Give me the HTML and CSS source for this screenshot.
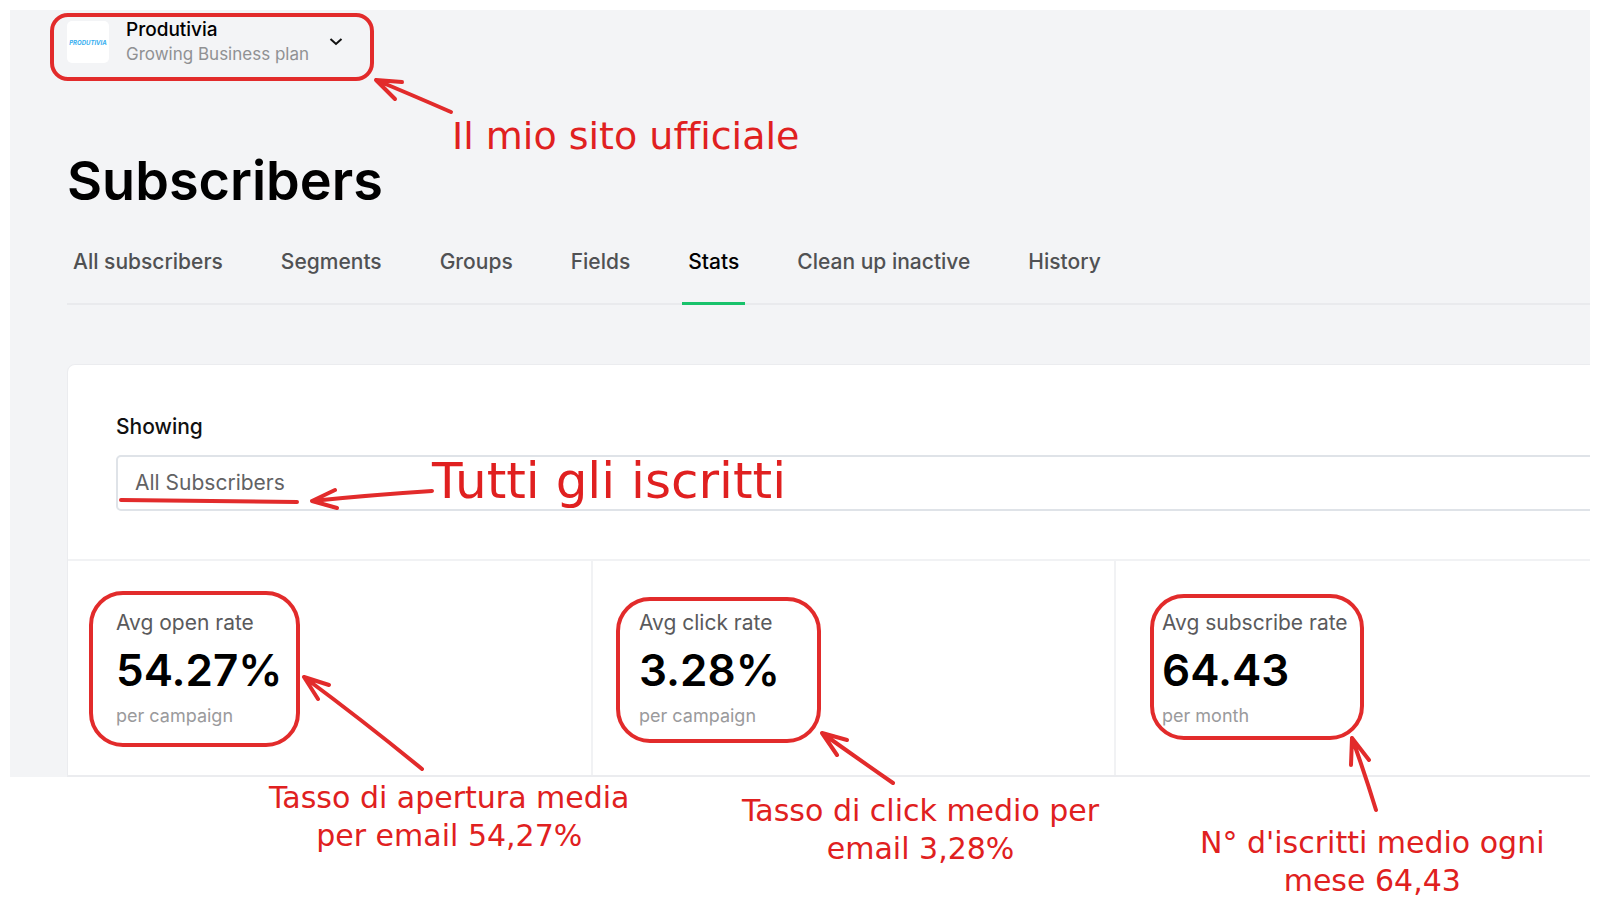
FILE: index.html
```
<!DOCTYPE html>
<html lang="it">
<head>
    <meta charset="UTF-8">
    <meta name="viewport" content="width=device-width, initial-scale=1.0">
    <title>Subscribers - Stats</title>
    <link rel="stylesheet" href="styles.css">
</head>
<body>
    <div class="board">
        <div class="app">
            <button type="button" class="account">
                <span class="account-logo">PRODUTIVIA</span>
                <span class="account-text">
                    <span class="account-name">Produtivia</span>
                    <span class="account-plan">Growing Business plan</span>
                </span>
                <svg class="chevron" viewBox="0 0 14 8" aria-hidden="true">
                    <path d="M1.5 1 L7 6 L12.5 1"/>
                </svg>
            </button>

            <h1>Subscribers</h1>

            <nav class="tabs">
                <a href="#">All subscribers</a>
                <a href="#">Segments</a>
                <a href="#">Groups</a>
                <a href="#">Fields</a>
                <a href="#" class="active">Stats</a>
                <a href="#">Clean up inactive</a>
                <a href="#">History</a>
            </nav>

            <main class="card">
                <div class="filter">
                    <label for="showing">Showing</label>
                    <select id="showing">
                        <option>All Subscribers</option>
                    </select>
                </div>
                <div class="stats">
                    <div class="stat">
                        <div class="stat-label">Avg open rate</div>
                        <div class="stat-value">54.27%</div>
                        <div class="stat-note">per campaign</div>
                    </div>
                    <div class="stat">
                        <div class="stat-label">Avg click rate</div>
                        <div class="stat-value">3.28%</div>
                        <div class="stat-note">per campaign</div>
                    </div>
                    <div class="stat">
                        <div class="stat-label">Avg subscribe rate</div>
                        <div class="stat-value">64.43</div>
                        <div class="stat-note">per month</div>
                    </div>
                </div>
            </main>
        </div>

        <!-- Hand drawn notes -->
        <svg class="marks" width="1600" height="912" viewBox="0 0 1600 912" aria-hidden="true">
            <rect x="52" y="15" width="320" height="64" rx="16"/>
            <rect x="91" y="593" width="207" height="152" rx="32"/>
            <rect x="618" y="599" width="201" height="142" rx="32"/>
            <rect x="1152" y="596" width="210" height="142" rx="32"/>

            <path d="M451 112 Q412 95 376 80 M402 82 L376 80 L395 99"/>
            <path d="M121 500 L297 502"/>
            <path d="M432 491 Q370 495 312 501 M335 490 L312 501 L337 508"/>
            <path d="M422 769 Q366 723 304 677 M329 685 L304 677 L318 699"/>
            <path d="M893 783 Q857 758 822 733 M847 740 L822 733 L837 755"/>
            <path d="M1376 810 Q1365 774 1352 738 M1369 760 L1352 738 L1351 765"/>
        </svg>
        <p class="note note-site">Il mio sito ufficiale</p>
        <p class="note note-all">Tutti gli iscritti</p>
        <p class="note note-open">Tasso di apertura media<br>per email 54,27%</p>
        <p class="note note-click">Tasso di click medio per<br>email 3,28%</p>
        <p class="note note-month">N° d'iscritti medio ogni<br>mese 64,43</p>
    </div>
</body>
</html>
```
FILE: styles.css
```
* {
    margin: 0;
    padding: 0;
    box-sizing: border-box;
}

body {
    font-family: Inter, "Liberation Sans", sans-serif;
    background-color: #fff;
    color: #000;
}

.board {
    position: relative;
    min-height: 100vh;
    padding: 10px;
    overflow: hidden;
}

.app {
    background-color: #f3f4f6;
    padding: 8px 0 0 57px;
    overflow: hidden;
}

.account {
    display: flex;
    align-items: center;
    gap: 17px;
    border: none;
    background: none;
    font-family: inherit;
    text-align: left;
    cursor: pointer;
}

.account-logo {
    display: flex;
    align-items: center;
    justify-content: center;
    width: 42px;
    height: 42px;
    border-radius: 5px;
    background-color: #fff;
    color: #35aef0;
    font-size: 6px;
    font-weight: 700;
    font-style: italic;
}

.account-text {
    display: flex;
    flex-direction: column;
}

.account-name {
    font-size: 19px;
    line-height: 24px;
    font-weight: 500;
}

.account-plan {
    font-size: 17px;
    line-height: 24px;
    color: #909193;
}

.chevron {
    width: 14px;
    height: 8px;
    margin-left: 3px;
    fill: none;
    stroke: #111;
    stroke-width: 2;
}

h1 {
    margin-top: 79px;
    font-size: 54px;
    line-height: 72px;
    font-weight: 600;
}

.tabs {
    display: flex;
    gap: 46px;
    margin-top: 19px;
    border-bottom: 2px solid #e9eaed;
}

.tabs a {
    padding: 12px 6px 26px;
    margin-bottom: -2px;
    border-bottom: 3px solid transparent;
    font-size: 21px;
    line-height: 28px;
    font-weight: 500;
    color: #505153;
    text-decoration: none;
    white-space: nowrap;
}

.tabs .active {
    color: #000;
    border-bottom-color: #18c26b;
}

/* the card runs on past the right edge */
.card {
    width: calc(100% + 48px);
    margin-top: 59px;
    background-color: #fff;
    border: 1px solid #ebecef;
    border-bottom-width: 2px;
    border-radius: 8px 0 0 0;
}

.filter {
    padding: 48px 0 48px 48px;
    border-bottom: 2px solid #f1f2f4;
}

.filter label {
    display: block;
    margin-bottom: 14px;
    font-size: 21px;
    line-height: 28px;
    font-weight: 500;
    color: #111;
}

.filter select {
    display: block;
    width: 100%;
    height: 56px;
    padding: 0 17px 2px;
    border: 2px solid #dfe3e8;
    border-radius: 5px;
    background-color: #fff;
    color: #626264;
    font-family: inherit;
    font-size: 21px;
    appearance: none;
}

.stats {
    display: grid;
    grid-template-columns: repeat(3, 1fr);
}

.stat {
    padding: 48px 46px 47px;
    border-left: 2px solid #f1f2f4;
}

.stat:first-child {
    border-left-color: transparent;
}

.stat-label {
    font-size: 21px;
    line-height: 27px;
    color: #5a5a5c;
}

.stat-value {
    font-size: 44px;
    line-height: 68px;
    font-weight: 600;
}

.stat-note {
    font-size: 18px;
    line-height: 24px;
    color: #9a9a9c;
}

.marks {
    position: absolute;
    top: 0;
    left: 0;
    fill: none;
    stroke: #e22b2b;
    stroke-width: 4;
    stroke-linecap: round;
    stroke-linejoin: round;
    pointer-events: none;
}

.note {
    position: absolute;
    color: #e02020;
    font-family: Excalifont, "DejaVu Sans", sans-serif;
    font-size: 30px;
    line-height: 38px;
    font-variant-ligatures: none;
    text-align: center;
    white-space: nowrap;
}

.note-site {
    left: 452px;
    top: 117px;
    font-size: 38px;
}

.note-all {
    left: 432px;
    top: 462px;
    font-size: 50px;
}

.note-open {
    left: 269px;
    top: 779px;
}

.note-click {
    left: 742px;
    top: 792px;
}

.note-month {
    left: 1200px;
    top: 824px;
}
```
